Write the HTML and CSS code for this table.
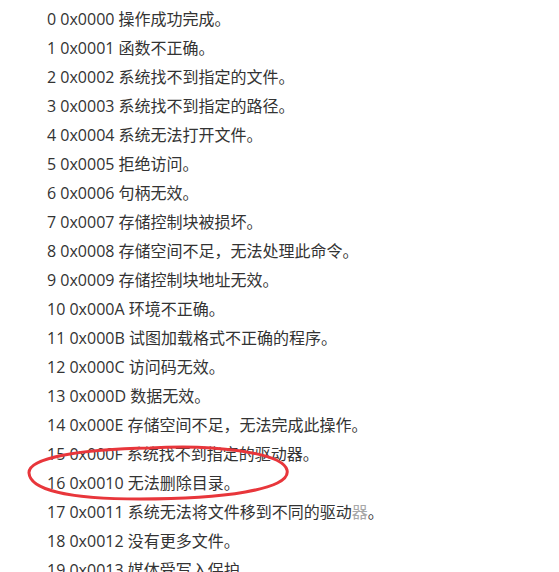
FILE: index.html
```html
<!DOCTYPE html>
<html lang="zh-CN">
<head>
<meta charset="utf-8">
<title>错误代码</title>
<link rel="stylesheet" href="styles.css">
</head>
<body>
<div class="page">
  <ul class="codes">
    <li>0 0x0000 操作成功完成。</li>
    <li>1 0x0001 函数不正确。</li>
    <li>2 0x0002 系统找不到指定的文件。</li>
    <li>3 0x0003 系统找不到指定的路径。</li>
    <li>4 0x0004 系统无法打开文件。</li>
    <li>5 0x0005 拒绝访问。</li>
    <li>6 0x0006 句柄无效。</li>
    <li>7 0x0007 存储控制块被损坏。</li>
    <li>8 0x0008 存储空间不足，无法处理此命令。</li>
    <li>9 0x0009 存储控制块地址无效。</li>
    <li>10 0x000A 环境不正确。</li>
    <li>11 0x000B 试图加载格式不正确的程序。</li>
    <li>12 0x000C 访问码无效。</li>
    <li>13 0x000D 数据无效。</li>
    <li>14 0x000E 存储空间不足，无法完成此操作。</li>
    <li>15 0x000F 系统找不到指定的驱动器。</li>
    <li>16 0x0010 无法删除目录。</li>
    <li>17 0x0011 系统无法将文件移到不同的驱动<span class="faded">器</span>。</li>
    <li>18 0x0012 没有更多文件。</li>
    <li>19 0x0013 媒体受写入保护。</li>
  </ul>
  <svg class="mark" width="559" height="572" viewBox="0 0 559 572" aria-hidden="true">
    <path d="M150 448 C 210 444, 282 452, 287 470 C 292 490, 220 499, 140 499 C 70 499, 30 490, 29 473 C 28 458, 80 449, 150 448 Z" fill="none" stroke="#e8363b" stroke-width="3"/>
  </svg>
</div>
</body>
</html>
```

FILE: styles.css
```css
html, body {
  margin: 0;
  padding: 0;
  background: #ffffff;
}

.page {
  position: relative;
  width: 559px;
  height: 572px;
  overflow: hidden;
}

.codes {
  list-style: none;
  margin: 0;
  padding: 5px 0 0 47px;
  font-family: "Open Sans", "Noto Sans CJK SC", sans-serif;
  font-size: 16px;
  line-height: 29px;
  color: #333333;
}

.codes li {
  white-space: nowrap;
}

.faded {
  color: #a8a8a8;
}

.mark {
  position: absolute;
  left: 0;
  top: 0;
  pointer-events: none;
}
```
